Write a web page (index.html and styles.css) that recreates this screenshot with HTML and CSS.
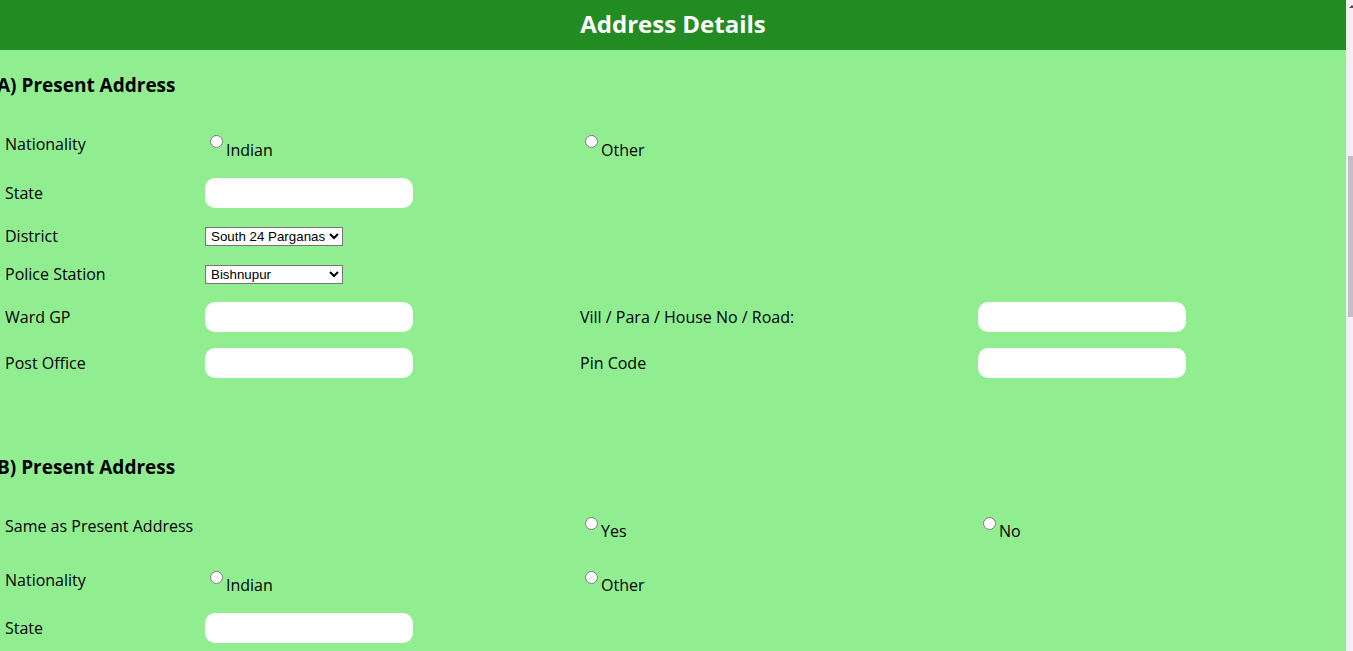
FILE: index.html
```html
<!DOCTYPE html>
<html lang="en">
<head>
<meta charset="utf-8">
<title>Address Details</title>
<link rel="stylesheet" href="styles.css">
</head>
<body>
<div class="page">
  <main class="main">
    <header class="topbar">
      <h2 class="title">Address Details</h2>
    </header>

    <section class="sec sec-a">
      <h3 class="sec-title">A) Present Address</h3>
      <div class="form">
        <div class="row row-opt">
          <span class="lbl">Nationality</span>
          <label class="opt"><input type="radio" name="natA"><span>Indian</span></label>
          <label class="opt"><input type="radio" name="natA"><span>Other</span></label>
        </div>
        <div class="row row-input">
          <span class="lbl">State</span>
          <input class="txt" type="text">
        </div>
        <div class="row row-sel">
          <span class="lbl">District</span>
          <select class="sel"><option>South 24 Parganas</option></select>
        </div>
        <div class="row row-sel row-sel-last">
          <span class="lbl">Police Station</span>
          <select class="sel"><option>Bishnupur</option></select>
        </div>
        <div class="row row-input">
          <span class="lbl">Ward GP</span>
          <input class="txt" type="text">
          <span class="lbl">Vill / Para / House No / Road:</span>
          <input class="txt" type="text">
        </div>
        <div class="row row-input row-tight">
          <span class="lbl">Post Office</span>
          <input class="txt" type="text">
          <span class="lbl">Pin Code</span>
          <input class="txt" type="text">
        </div>
      </div>
    </section>

    <section class="sec sec-b">
      <h3 class="sec-title">B) Present Address</h3>
      <div class="form">
        <div class="row row-opt">
          <span class="lbl">Same as Present Address</span>
          <span></span>
          <label class="opt opt-tight"><input type="radio" name="same"><span>Yes</span></label>
          <label class="opt opt-tight"><input type="radio" name="same"><span>No</span></label>
        </div>
        <div class="row row-opt row-extra">
          <span class="lbl">Nationality</span>
          <label class="opt opt-tight"><input type="radio" name="natB"><span>Indian</span></label>
          <label class="opt opt-tight"><input type="radio" name="natB"><span>Other</span></label>
        </div>
        <div class="row row-input">
          <span class="lbl">State</span>
          <input class="txt" type="text">
        </div>
      </div>
    </section>
  </main>
  <div class="scrollbar">
    <div class="sb-arrow"></div>
    <div class="sb-thumb"></div>
  </div>
</div>
</body>
</html>
```

FILE: styles.css
```css
html, body {
  margin: 0;
  padding: 0;
  height: 100%;
  overflow: hidden;
}

body {
  background: #90ee90;
  color: #000;
  font-family: "Open Sans", "DejaVu Sans", sans-serif;
  font-size: 16px;
}

.page {
  display: flex;
  height: 100vh;
}

.main {
  flex: 1;
  min-width: 0;
  overflow: hidden;
}

.topbar {
  height: 50px;
  background: #228b22;
}

.title {
  margin: 0;
  text-align: center;
  color: #fff;
  font-size: 24px;
  font-weight: 700;
  line-height: 48px;
}

.sec-title {
  margin: 22px 0 0 -3px;
  font-size: 19px;
  font-weight: 700;
  line-height: 26px;
}

.sec-b {
  margin-top: 76px;
}

.form {
  margin-top: 28px;
  padding-left: 5px;
  display: flex;
  flex-direction: column;
  gap: 17px;
}

.row {
  display: grid;
  grid-template-columns: 200px 375px 398px 1fr;
  align-items: center;
}

.lbl {
  line-height: 22px;
  white-space: nowrap;
}

.row-sel {
  height: 21px;
}

.row-sel-last {
  height: 22px;
}

.row-tight {
  margin-top: -1px;
}

.row-opt {
  align-items: start;
}

.row-opt .lbl {
  align-self: center;
  padding-top: 1px;
}

.row-extra {
  margin-top: 3px;
}

.opt {
  display: flex;
  align-items: flex-start;
}

.opt input {
  width: 13px;
  height: 13px;
  margin: 9px 3px 0 5px;
}

.opt span {
  padding-top: 13px;
  line-height: 22px;
}

.opt-tight span {
  padding-top: 12px;
}

.txt {
  box-sizing: border-box;
  width: 208px;
  height: 30px;
  border: 0;
  border-radius: 10px;
  background: #fff;
  padding: 0 8px;
  outline: none;
}

.sel {
  box-sizing: border-box;
  width: 138px;
  height: 19px;
  font-family: "Liberation Sans", Arial, sans-serif;
  font-size: 13.333px;
  border: 1px solid #767676;
  border-radius: 0;
  background: #fff;
  color: #000;
  padding: 0 0 0 1px;
}

.scrollbar {
  width: 7px;
  flex: 0 0 7px;
  background: #f1f1f1;
  display: flex;
  flex-direction: column;
}

.sb-arrow {
  width: 0;
  height: 0;
  margin: 5px 0 0 3px;
  border-left: 3px solid transparent;
  border-right: 3px solid transparent;
  border-bottom: 3px solid #505050;
}

.sb-thumb {
  margin: 148px 0 0 2px;
  height: 161px;
  background: #c1c1c1;
}
```
